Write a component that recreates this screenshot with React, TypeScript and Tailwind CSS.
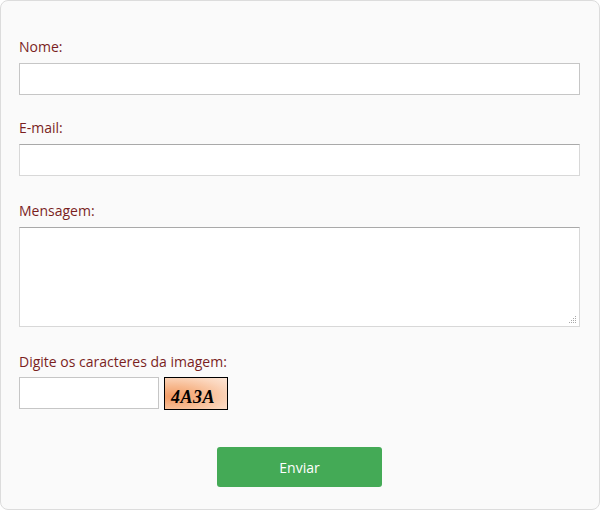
import React from "react";

const labelCls = "block text-[14px] leading-[20px] text-[#7a1f1f]";

export default function App() {
  return (
    <div
      className="w-[600px] h-[510px] box-border border border-[#dcdcdc] rounded-[8px] bg-[#fafafa] pl-[18px] pr-[19px] pt-[36px]"
      style={{ fontFamily: '"Open Sans", "Noto Sans", sans-serif' }}
    >
      <label className={labelCls + " mb-[6px]"}>Nome:</label>
      <input
        type="text"
        className="block w-[561px] h-[32px] box-border bg-white border border-[#c6c6c6] outline-none"
      />

      <label className={labelCls + " mt-[23px] mb-[6px]"}>E-mail:</label>
      <input
        type="text"
        className="block w-[561px] h-[32px] box-border bg-white border border-[#d8d8d8] border-t-[#a9a9a9] outline-none"
      />

      <label className={labelCls + " mt-[25px] mb-[6px]"}>Mensagem:</label>
      <div className="relative w-[561px] h-[100px]">
        <textarea className="block w-[561px] h-[100px] box-border bg-white border border-[#d8d8d8] border-t-[#a9a9a9] outline-none resize-none" />
        <svg
          className="absolute right-[3px] bottom-[3px]"
          width="8"
          height="8"
          viewBox="0 0 8 8"
        >
          <g fill="#a8a8a8">
            <rect x="6" y="0" width="1" height="1" />
            <rect x="4" y="2" width="1" height="1" />
            <rect x="6" y="2" width="1" height="1" />
            <rect x="2" y="4" width="1" height="1" />
            <rect x="4" y="4" width="1" height="1" />
            <rect x="6" y="4" width="1" height="1" />
            <rect x="0" y="6" width="1" height="1" />
            <rect x="2" y="6" width="1" height="1" />
            <rect x="4" y="6" width="1" height="1" />
            <rect x="6" y="6" width="1" height="1" />
          </g>
        </svg>
      </div>

      <label className={labelCls + " mt-[25px] mb-[5px]"}>
        Digite os caracteres da imagem:
      </label>
      <div className="flex items-start gap-[5px]">
        <input
          type="text"
          className="block w-[140px] h-[32px] box-border bg-white border border-[#c6c6c6] outline-none"
        />
        <div className="w-[64px] h-[33px] box-border border border-black bg-[radial-gradient(ellipse_at_12%_60%,#f29a63_0%,#f7b98f_40%,#fbd6bd_75%,#fde6d6_100%)] flex items-end pl-[6px] pb-[2px]">
          <span
            className="text-[18px] leading-[20px] font-bold italic text-black tracking-[0.5px]"
            style={{ fontFamily: '"Liberation Serif", "DejaVu Serif", serif' }}
          >
            4A3A
          </span>
        </div>
      </div>

      <div className="flex justify-center mt-[37px]">
        <button className="w-[165px] h-[40px] bg-[#44aa56] rounded-[3px] text-white text-[14px]">
          Enviar
        </button>
      </div>
    </div>
  );
}
